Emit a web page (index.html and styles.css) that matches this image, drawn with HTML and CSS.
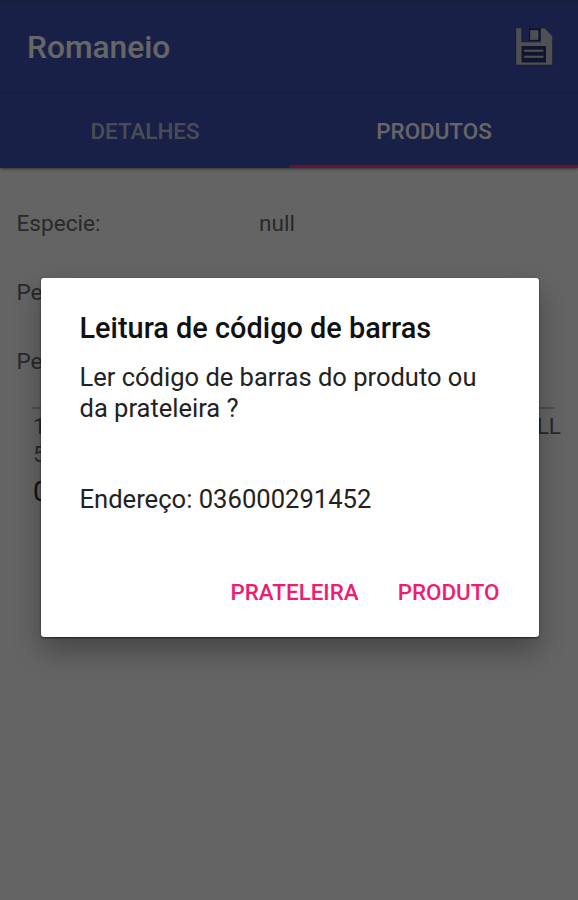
FILE: index.html
```
<!DOCTYPE html>
<html lang="pt-BR">

<head>
  <meta charset="UTF-8" />
  <meta name="viewport" content="width=device-width, initial-scale=1.0" />
  <title>Romaneio</title>
  <link rel="stylesheet" href="styles.css">
</head>

<body>
  <div class="screen">
    <header class="appbar">
      <h1 class="appbar-title">Romaneio</h1>
      <svg class="save-icon" viewBox="0 0 40 42" width="40" height="42">
        <path class="save-body" d="M3 2h5.500v14h19V2h4l8 8v29H3z" />
        <path class="save-shutter" d="M16 2h11.500v13H16z" />
        <path class="save-body" d="M17 4h8.500v10H17z" />
        <path class="save-edge" d="M8.500 20h24.500v16.500H8.500z" />
        <path class="save-body" d="M11 23.500h19.500v2.500H11zM11 29.500h19.500v2.500H11z" />
      </svg>
    </header>
    <nav class="tabs">
      <div class="tab">Detalhes</div>
      <div class="tab active">Produtos</div>
    </nav>

    <main class="content">
      <div class="field"><span class="label">Especie:</span><span>null</span></div>
      <div class="field"><span class="label">Peso:</span></div>
      <div class="field"><span class="label">Peso:</span></div>
      <div class="item">
        <div class="item-line"><span>1</span><span>LL</span></div>
        <div class="item-line">5</div>
        <div class="item-total">0</div>
      </div>
    </main>
  </div>

  <div class="overlay">
    <div class="dialog">
      <h2 class="dialog-title">Leitura de código de barras</h2>
      <p class="message">Ler código de barras do produto ou da prateleira ?</p>
      <p class="address">Endereço: 036000291452</p>
      <div class="actions">
        <button class="btn">Prateleira</button>
        <button class="btn">Produto</button>
      </div>
    </div>
  </div>
</body>

</html>
```

FILE: styles.css
```
* {
  margin: 0;
  padding: 0;
  box-sizing: border-box;
}

html, body {
  width: 100%;
  height: 100vh;
  overflow: hidden;
  background: #fafafa;
  font-family: Roboto, sans-serif;
}

.screen {
  height: 100vh;
  border-top: 3px solid #394ba5;
}

.appbar {
  display: flex;
  align-items: center;
  justify-content: space-between;
  height: 90px;
  padding: 0 25px 2px 27px;
  background: #3f51b5;
}

.appbar-title {
  font-size: 31.7px;
  font-weight: 500;
  color: #fff;
}

.save-body {
  fill: #c4c8d0;
  stroke: #28346f;
  stroke-width: 0.4;
}

.save-shutter,
.save-edge {
  fill: #28346f;
}

.tabs {
  display: flex;
  height: 75px;
  background: #3f51b5;
  border-top: 1px solid #394aa6;
  box-shadow: 0 1px 3px rgba(0, 0, 0, 0.5);
}

.tab {
  flex: 1;
  padding: 22px 0 0 1px;
  line-height: 30px;
  font-size: 22.4px;
  font-weight: 500;
  text-align: center;
  text-transform: uppercase;
  color: #b8bfd0;
}

.tab.active {
  color: #fff;
  border-bottom: 3px solid #ff3075;
}

.content {
  padding-top: 21px;
  font-size: 22.6px;
  color: #666;
}

.field {
  display: flex;
  height: 69px;
  padding-left: 16.5px;
  line-height: 70px;
}

.label {
  width: 242.5px;
}

.item {
  margin: 11px 24px 0 32px;
  border-top: 2px solid #c0c0c0;
}

.item-line {
  display: flex;
  justify-content: space-between;
  height: 28px;
  margin: 2px -7px -2px 1px;
  line-height: 31px;
}

.item-total {
  padding-left: 1px;
  margin-top: 7px;
  font-size: 28px;
  line-height: 40px;
  color: #333;
}

.overlay {
  position: absolute;
  inset: 0;
  display: flex;
  align-items: flex-start;
  justify-content: center;
  padding: 278px 0 0 1px;
  background: rgba(0, 0, 0, 0.6);
}

.dialog {
  width: 498px;
  height: 359px;
  padding: 32px 39px 0;
  background: #fff;
  border-radius: 3px;
  box-shadow: 0 1px 2px rgba(0, 0, 0, 0.6), 0 14px 28px rgba(0, 0, 0, 0.3);
}

.dialog-title {
  font-size: 28.9px;
  font-weight: 500;
  line-height: 36px;
  color: #111;
}

.message, .address {
  font-size: 25.5px;
  line-height: 31px;
  color: #222;
}

.message {
  margin-top: 16px;
}

.address {
  margin-top: 60px;
  font-size: 25.6px;
}

.actions {
  display: flex;
  justify-content: flex-end;
  gap: 39px;
  margin-top: 61px;
}

.btn {
  border: 0;
  background: none;
  font-family: inherit;
  font-size: 22.4px;
  font-weight: 500;
  line-height: 32px;
  text-transform: uppercase;
  color: #f01c70;
}
```
